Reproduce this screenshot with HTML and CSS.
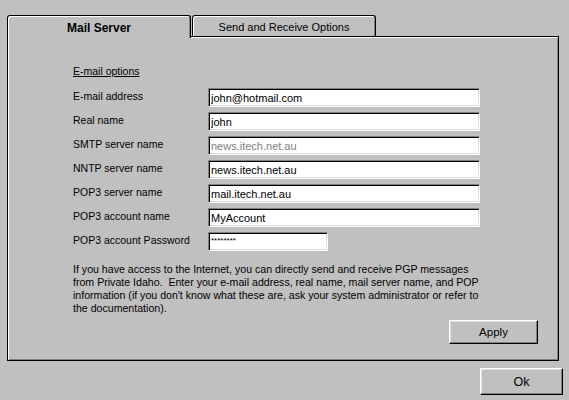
FILE: index.html
```html
<!DOCTYPE html>
<html>
<head>
<meta charset="utf-8">
<link rel="stylesheet" href="styles.css">
</head>
<body>
<div class="dialog">
  <div class="tabs">
    <div class="tab active">Mail Server</div>
    <div class="tab">Send and Receive Options</div>
  </div>
  <div class="panel">
    <div class="section">E-mail options</div>
    <div class="form">
      <label class="lbl">E-mail address</label>
      <input class="field" type="text" value="john@hotmail.com">
      <label class="lbl">Real name</label>
      <input class="field" type="text" value="john">
      <label class="lbl">SMTP server name</label>
      <input class="field dim" type="text" value="news.itech.net.au">
      <label class="lbl">NNTP server name</label>
      <input class="field" type="text" value="news.itech.net.au">
      <label class="lbl">POP3 server name</label>
      <input class="field" type="text" value="mail.itech.net.au">
      <label class="lbl">POP3 account name</label>
      <input class="field" type="text" value="MyAccount">
      <label class="lbl">POP3 account Password</label>
      <input class="field short pw" type="text" value="********">
    </div>
    <p class="info">If you have access to the Internet, you can directly send and receive PGP messages<br>from Private Idaho.&nbsp; Enter your e-mail address, real name, mail server name, and POP<br>information (if you don't know what these are, ask your system administrator or refer to<br>the documentation).</p>
    <div class="apply-row"><button class="btn apply">Apply</button></div>
  </div>
  <div class="ok-row"><button class="btn ok">Ok</button></div>
</div>
</body>
</html>
```
FILE: styles.css
```css
html, body {
  margin: 0;
  padding: 0;
  background: #c0c0c0;
}
body {
  font-family: "Liberation Sans", Arial, sans-serif;
  color: #000;
  width: 569px;
  height: 400px;
  overflow: hidden;
}
.dialog {
  padding: 15px 6px 0 7px;
}
.tabs {
  display: flex;
  height: 21px;
}
.tab {
  box-sizing: border-box;
  width: 184px;
  height: 21px;
  border: 1px solid #000;
  border-bottom: none;
  border-radius: 3px 3px 0 0;
  box-shadow: inset 1px 1px #fff, inset -1px 0 #808080;
  background: #c0c0c0;
  font-size: 11px;
  display: flex;
  align-items: center;
  justify-content: center;
  padding-top: 1px;
}
.tab.active {
  height: 23px;
  position: relative;
  z-index: 1;
  font-weight: bold;
  font-size: 12px;
  padding-top: 2px;
}
.tab + .tab {
  margin-left: 1px;
}
.panel {
  box-sizing: border-box;
  width: 552px;
  height: 325px;
  border: 1px solid #000;
  box-shadow: inset 1px 1px #fff, inset -1px -1px #808080;
  padding: 28px 20px 0 65px;
}
.section {
  font-size: 10.5px;
  line-height: 13px;
  text-decoration: underline;
}
.form {
  margin-top: 10px;
  display: grid;
  grid-template-columns: 135px auto;
  row-gap: 5px;
  align-items: center;
  justify-items: start;
}
.lbl {
  font-size: 10.5px;
  line-height: 13px;
  margin-top: -2px;
}
.field {
  box-sizing: border-box;
  width: 272px;
  height: 19px;
  margin: 0;
  padding: 0 2px;
  border: 1px solid;
  border-color: #808080 #fff #fff #808080;
  box-shadow: inset 1px 1px #000, inset -1px -1px #dfdfdf;
  background: #fff;
  font-family: "Liberation Sans", Arial, sans-serif;
  font-size: 11px;
  color: #000;
  outline: none;
}
.field.dim {
  color: #808080;
}
.field.short {
  width: 120px;
}
.field.pw {
  font-size: 8px;
  padding-bottom: 3px;
}
.info {
  margin: 12px 0 0 0;
  font-size: 10.6px;
  line-height: 13px;
  white-space: nowrap;
}
.apply-row {
  display: flex;
  justify-content: flex-end;
  margin-top: 5px;
}
.btn {
  box-sizing: border-box;
  margin: 0;
  padding: 0;
  background: #c0c0c0;
  border: 1px solid;
  border-color: #fff #000 #000 #fff;
  box-shadow: inset -1px -1px #808080, inset 1px 1px #dfdfdf;
  font-family: "Liberation Sans", Arial, sans-serif;
  font-size: 11.5px;
  color: #000;
}
.apply {
  width: 89px;
  height: 24px;
}
.ok-row {
  display: flex;
  justify-content: flex-end;
  margin-top: 7px;
}
.ok {
  width: 83px;
  height: 27px;
  font-size: 12.5px;
}
```
